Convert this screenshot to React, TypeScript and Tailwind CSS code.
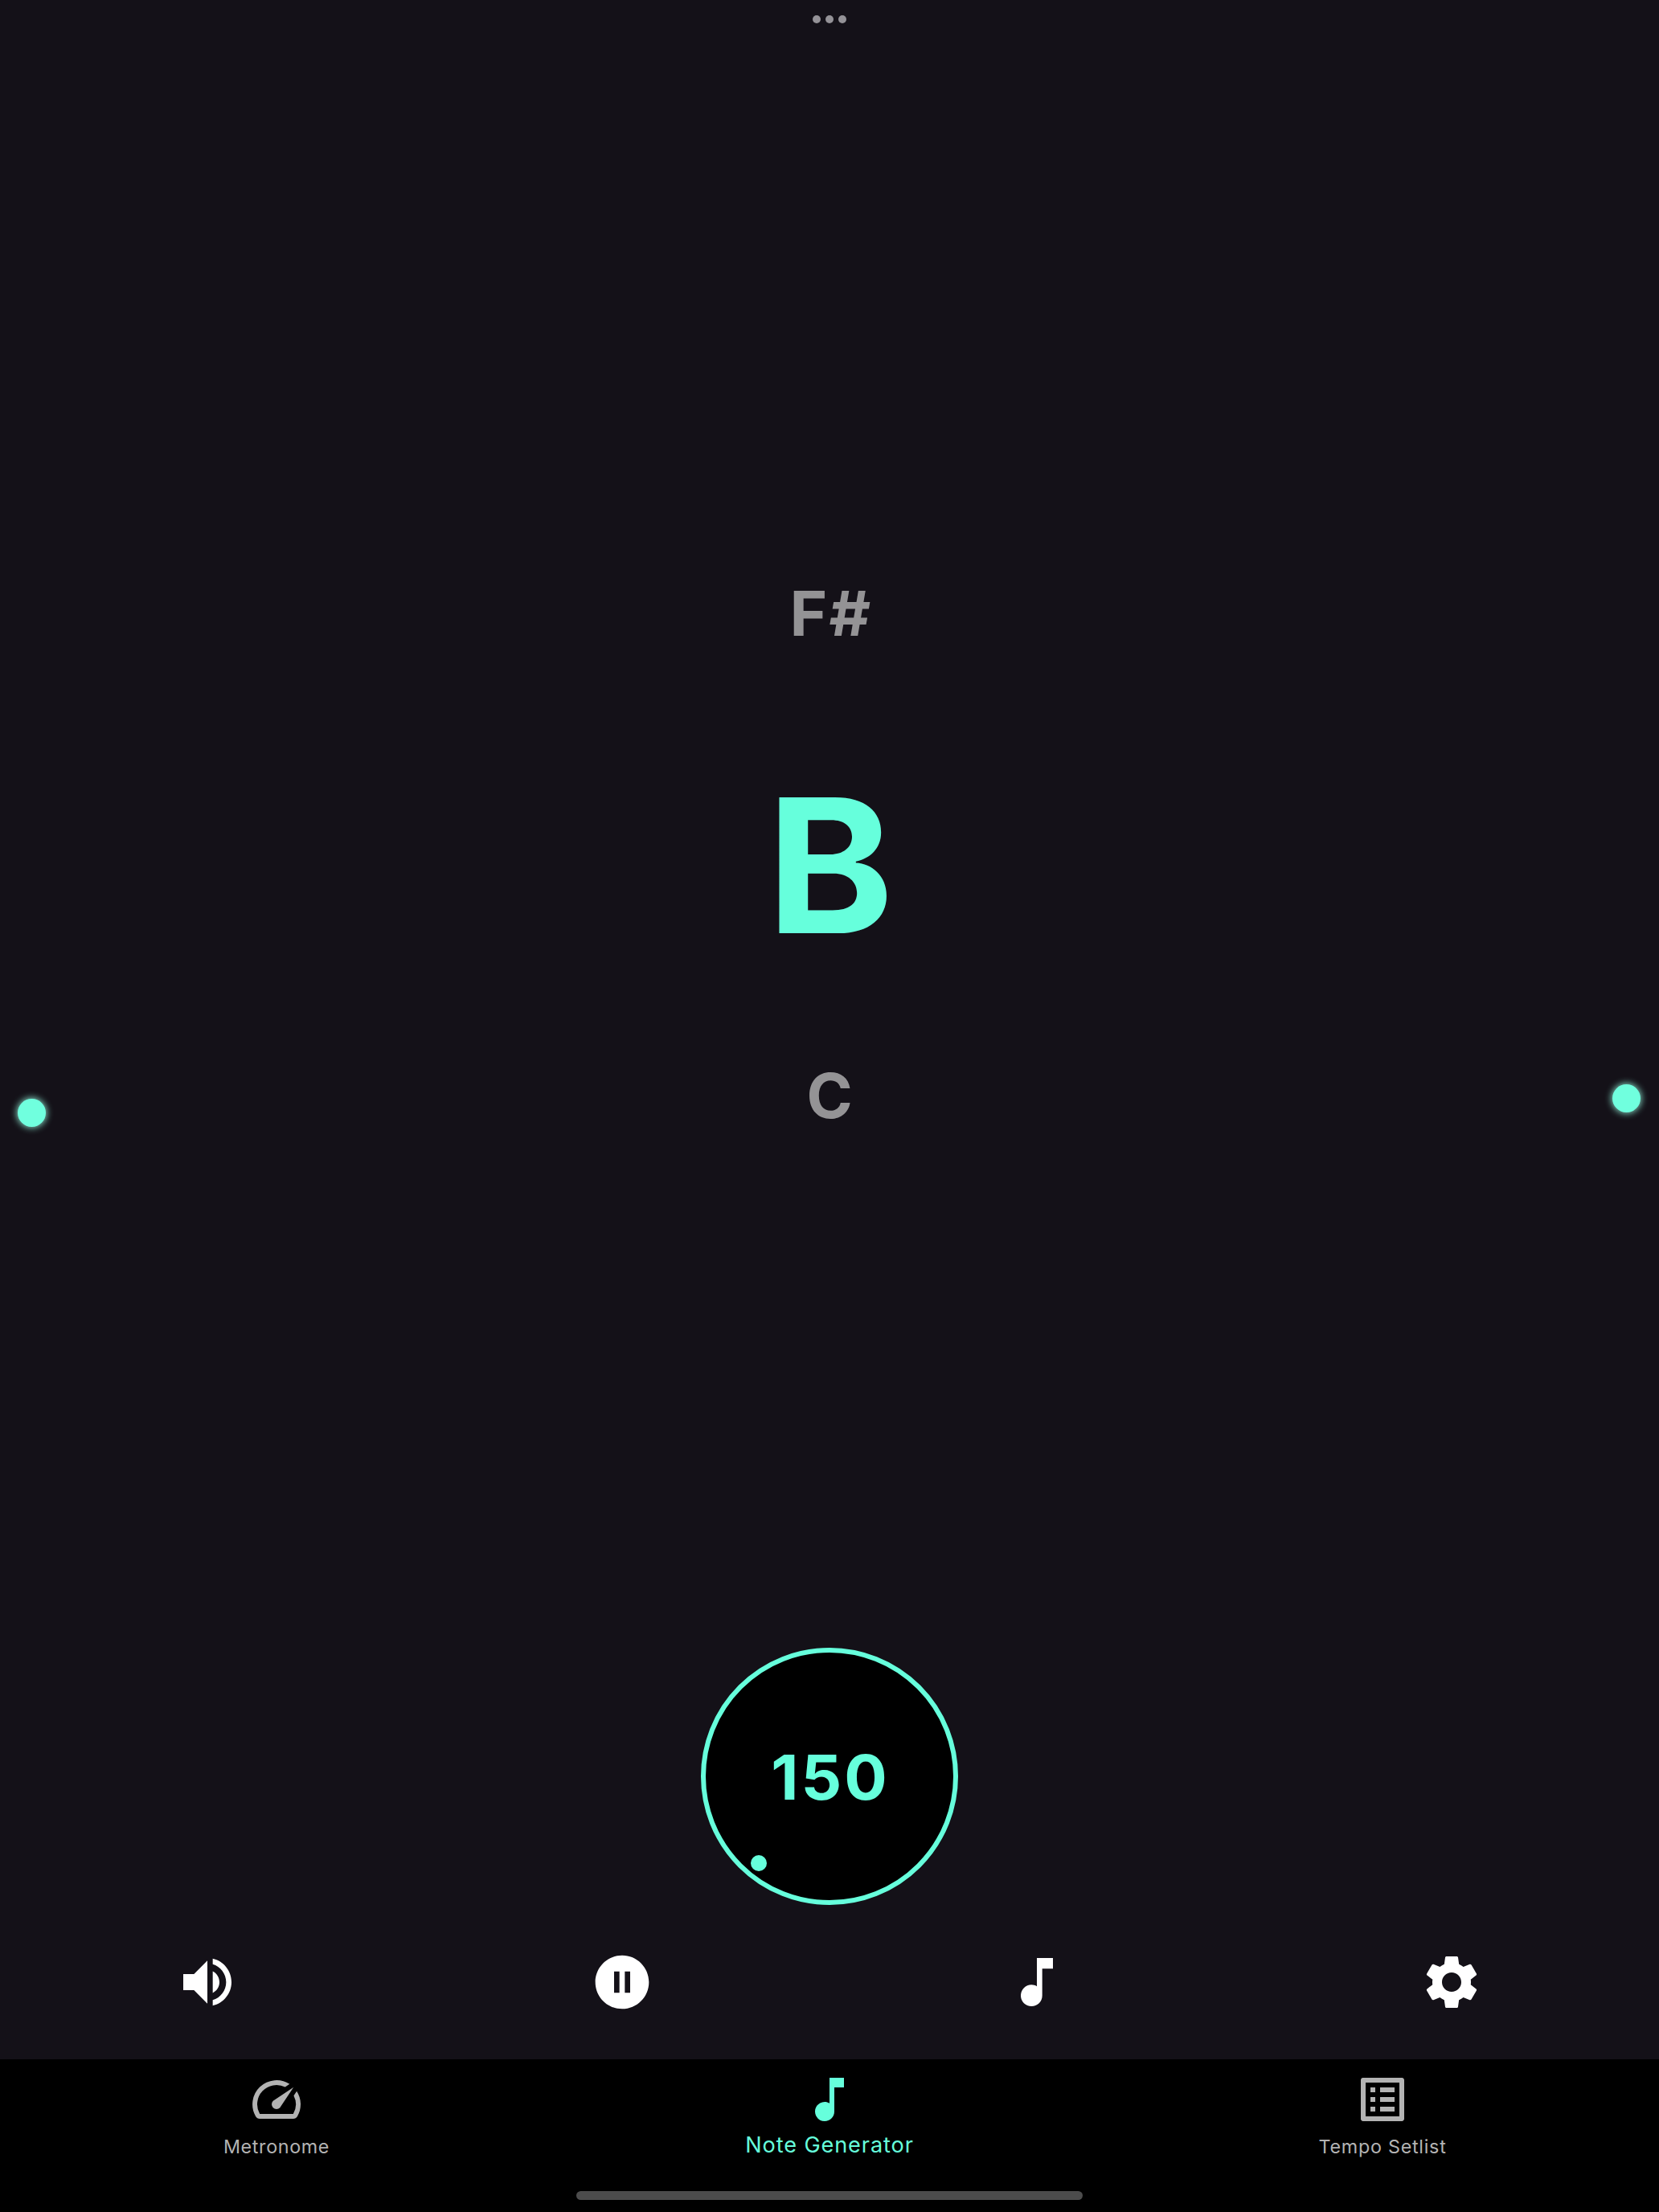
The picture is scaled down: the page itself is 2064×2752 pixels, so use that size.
import React from "react";

const ICONS = {
  volume:
    "M3 9v6h4l5 5V4L7 9H3zm13.5 3c0-1.77-1.02-3.29-2.5-4.03v8.05c1.48-.73 2.5-2.25 2.5-4.02zM14 3.23v2.06c2.89.86 5 3.54 5 6.71s-2.11 5.85-5 6.71v2.06c4.01-.91 7-4.49 7-8.77s-2.99-7.86-7-8.77z",
  pause:
    "M12 2C6.48 2 2 6.48 2 12s4.48 10 10 10 10-4.48 10-10S17.52 2 12 2zm-1 14H9V8h2v8zm4 0h-2V8h2v8z",
  note: "M12 3v10.55c-.59-.34-1.27-.55-2-.55-2.21 0-4 1.79-4 4s1.79 4 4 4 4-1.79 4-4V7h4V3h-6z",
  settings:
    "M19.14 12.94c.04-.3.06-.61.06-.94 0-.32-.02-.64-.07-.94l2.03-1.58c.18-.14.23-.41.12-.61l-1.92-3.32c-.12-.22-.37-.29-.59-.22l-2.39.96c-.5-.38-1.03-.7-1.62-.94l-.36-2.54c-.04-.24-.24-.41-.48-.41h-3.84c-.24 0-.43.17-.47.41l-.36 2.54c-.59.24-1.13.57-1.62.94l-2.39-.96c-.22-.08-.47 0-.59.22L2.74 8.87c-.12.21-.08.47.12.61l2.03 1.58c-.05.3-.09.63-.09.94s.02.64.07.94l-2.03 1.58c-.18.14-.23.41-.12.61l1.92 3.32c.12.22.37.29.59.22l2.39-.96c.5.38 1.03.7 1.62.94l.36 2.54c.05.24.24.41.48.41h3.84c.24 0 .44-.17.47-.41l.36-2.54c.59-.24 1.13-.56 1.62-.94l2.39.96c.22.08.47 0 .59-.22l1.92-3.32c.12-.22.07-.47-.12-.61l-2.01-1.58zM12 15.6c-1.98 0-3.6-1.62-3.6-3.6s1.62-3.6 3.6-3.6 3.6 1.62 3.6 3.6-1.62 3.6-3.6 3.6z",
  speed:
    "M20.38 8.57l-1.23 1.85a8 8 0 0 1-.22 7.58H5.07A8 8 0 0 1 15.58 6.85l1.85-1.23A10 10 0 0 0 3.35 19a2 2 0 0 0 1.72 1h13.85a2 2 0 0 0 1.74-1 10 10 0 0 0-.27-10.44zm-9.79 6.84a2 2 0 0 0 2.83 0l5.66-8.49-8.49 5.66a2 2 0 0 0 0 2.83z",
  list: "M19 5v14H5V5h14m1.1-2H3.9c-.5 0-.9.4-.9.9v16.2c0 .4.4.9.9.9h16.2c.4 0 .9-.5.9-.9V3.9c0-.5-.5-.9-.9-.9zM11 7h6v2h-6V7zm0 4h6v2h-6v-2zm0 4h6v2h-6v-2zM7 7h2v2H7V7zm0 4h2v2H7v-2zm0 4h2v2H7v-2z",
};

function Icon({ name, className }: { name: keyof typeof ICONS; className: string }) {
  return (
    <svg viewBox="0 0 24 24" fill="currentColor" className={className} aria-hidden="true">
      <path d={ICONS[name]} />
    </svg>
  );
}

const CONTROLS: { name: keyof typeof ICONS; label: string }[] = [
  { name: "volume", label: "Volume" },
  { name: "pause", label: "Pause" },
  { name: "note", label: "Notes" },
  { name: "settings", label: "Settings" },
];

export default function App() {
  return (
    <div className="relative flex h-[2752px] w-[2064px] flex-col overflow-hidden bg-[#141118] font-['Inter',sans-serif]">
      <div className="flex justify-center gap-[6px] pt-[19px]">
        <span className="size-[10px] rounded-full bg-[#949297]" />
        <span className="size-[10px] rounded-full bg-[#949297]" />
        <span className="size-[10px] rounded-full bg-[#949297]" />
      </div>

      <main className="flex flex-col items-center pt-[684px] font-bold">
        <div className="h-[100px] scale-x-[1.03] pl-[3px] text-[77.4px] leading-[100px] tracking-[2px] text-[#949395]">F#</div>
        <div className="mt-[144px] h-[240px] scale-x-[1.03] pl-[2px] text-[232.4px] leading-[240px] text-[#66ffdc]">B</div>
        <div className="mt-[116px] h-[100px] text-[77.4px] leading-[100px] text-[#949395]">C</div>
      </main>

      <span className="absolute left-[22px] top-[1367px] size-[35px] rounded-full bg-[#70ffde] shadow-[0_0_8px_1px_#8ae0cb]" />
      <span className="absolute left-[2006px] top-[1349px] size-[35px] rounded-full bg-[#70ffde] shadow-[0_0_8px_1px_#8ae0cb]" />

      <div className="relative mt-[637px] flex size-[320px] items-center justify-center self-center rounded-full border-[6px] border-[#66ffdc] bg-black">
        <span className="scale-x-[1.025] pl-[3px] pt-[2px] text-[77.4px] font-bold leading-[100px] tracking-[3px] text-[#66ffdc]">150</span>
        <span className="absolute left-[56px] top-[252px] size-[20px] rounded-full bg-[#66ffdc]" />
      </div>

      <div className="mt-[56px] grid grid-cols-4 text-white">
        {CONTROLS.map((c) => (
          <button key={c.name} aria-label={c.label} className="flex justify-center">
            <Icon name={c.name} className="size-[80px]" />
          </button>
        ))}
      </div>

      <nav className="relative mt-[56px] grid flex-1 grid-cols-3 bg-black pt-[14px] text-[#b3b3b3]">
        <a className="flex flex-col items-center">
          <Icon name="speed" className="size-[72px]" />
          <span className="mt-[7px] text-[23.3px] leading-[32px] tracking-[0.65px]">Metronome</span>
        </a>
        <a className="flex flex-col items-center text-[#66ffdc]">
          <Icon name="note" className="size-[72px]" />
          <span className="mt-[5px] text-[27.1px] leading-[32px] tracking-[0.9px]">Note Generator</span>
        </a>
        <a className="flex flex-col items-center">
          <Icon name="list" className="size-[72px]" />
          <span className="mt-[7px] text-[23.3px] leading-[32px] tracking-[0.75px]">Tempo Setlist</span>
        </a>
        <span className="absolute bottom-[15px] left-[717px] h-[11px] w-[630px] rounded-full bg-[#4c4c4c]" />
      </nav>
    </div>
  );
}
